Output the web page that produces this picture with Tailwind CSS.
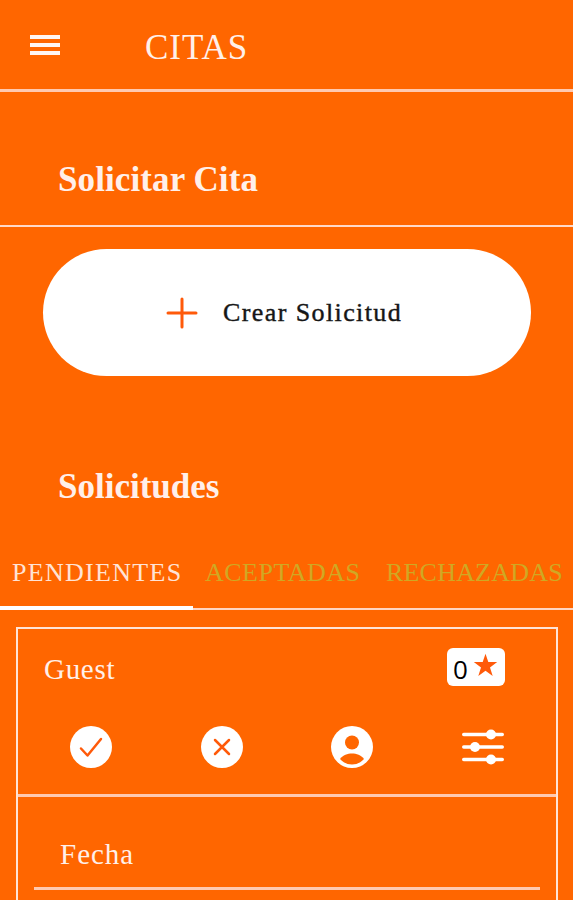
<!doctype html>
<html lang="es">
  <head>
    <meta charset="UTF-8">
    <meta name="viewport" content="width=device-width, initial-scale=1.0">
    <title>Citas</title>
    <script src="https://cdn.jsdelivr.net/npm/@tailwindcss/browser@4"></script>
  </head>
  <body class="h-screen overflow-hidden bg-[#ff6600] text-[#fff0ea] font-['Liberation_Serif',serif]">
    <header class="flex items-center h-[92px] border-b-3 border-[#ffc9b0] pl-[30px]">
      <button class="flex flex-col gap-1 w-[30px] mr-[85px]" aria-label="Menú">
        <span class="h-[4px] bg-[#fff6f2]"></span>
        <span class="h-[4px] bg-[#fff6f2]"></span>
        <span class="h-[4px] bg-[#fff6f2]"></span>
      </button>
      <h1 class="text-[35px] leading-none tracking-[1px] pt-[5px]">CITAS</h1>
    </header>

    <main>
      <div class="h-[135px] border-b-2 border-[#ffd9c8] pl-[58px] pt-[70px]">
        <h2 class="text-[35px] leading-none font-bold tracking-[0.1px]">Solicitar Cita</h2>
      </div>

      <div class="pt-[22px] pl-[43px]">
        <button class="flex items-center w-[488px] h-[127px] rounded-full bg-white pl-[123px] text-[#161616]">
          <svg class="w-8 h-8 mr-[25px]" viewBox="0 0 32 32" fill="none" stroke="#ff5a0a" stroke-width="3" stroke-linecap="round">
            <path d="M16 2v28M2 16h28" />
          </svg>
          <span class="text-[26px] leading-none tracking-[1.4px] [-webkit-text-stroke:0.4px_#161616]">Crear Solicitud</span>
        </button>
      </div>

      <h2 class="h-[170px] pl-[58px] pt-[93px] text-[35px] leading-none font-bold">Solicitudes</h2>

      <!-- tabs -->
      <nav class="flex h-[64px] text-[26px] leading-none text-[#d0a823]">
        <a class="w-[193px] border-b-4 border-white pl-[12px] pt-[14px] tracking-[1.3px] text-[#ffe3d6]">PENDIENTES</a>
        <a class="w-[181px] border-b-2 border-[#ffd5c1] pl-[12px] pt-[14px] tracking-[0.5px]">ACEPTADAS</a>
        <a class="w-[199px] border-b-2 border-[#ffd5c1] pl-[12px] pt-[14px] tracking-[0.2px]">RECHAZADAS</a>
      </nav>

      <section class="mt-[17px] ml-[16px] w-[542px] h-[300px] border-2 border-[#ffe3d6]">
        <div class="h-[168px] border-b-3 border-[#ffc9b0]">
          <div class="flex justify-between items-start pl-[26px] pr-[51px] pt-[19px]">
            <span class="text-[29px] leading-none tracking-[0.7px] pt-[7px]">Guest</span>
            <span class="flex items-center w-[58px] h-[38px] rounded-md bg-white pl-[6px] text-black">
              <span class="text-[26px] leading-none font-['Open_Sans',sans-serif] pt-[3px]">0</span>
              <svg class="w-[25px] h-[24px] ml-[5px] -mt-1" viewBox="0 0 24 24" fill="#ff5a0a">
                <path d="M12 .8l2.8 8.3h8.9l-7.2 5.3 2.7 8.5L12 17.7l-7.2 5.2 2.7-8.5L.3 9.100h8.900z" />
              </svg>
            </span>
          </div>
          <div class="flex justify-between pl-[52px] pr-[52px] pt-[40px]">
            <svg class="w-[42px] h-[42px]" viewBox="0 0 42 42" fill="none" stroke="#ff5a0a" stroke-width="2.500" stroke-linecap="round" stroke-linejoin="round">
              <circle cx="21" cy="21" r="21" fill="#fff" stroke="none" />
              <path d="M11 22.500l6.500 7L31 13" />
            </svg>
            <svg class="w-[42px] h-[42px]" viewBox="0 0 42 42" fill="none" stroke="#ff5a0a" stroke-width="2.500" stroke-linecap="round">
              <circle cx="21" cy="21" r="21" fill="#fff" stroke="none" />
              <path d="M14 14l14 14M28 14L14 28" />
            </svg>
            <svg class="w-[42px] h-[42px]" viewBox="0 0 42 42" fill="#ff6600">
              <circle cx="21" cy="21" r="21" fill="#fff" />
              <circle cx="21" cy="16.500" r="7" />
              <path d="M9 33C12 29 16.500 27.500 21 27.500S30 29 33 33C29.500 36.800 25.500 38.500 21 38.500S12.500 36.800 9 33z" />
            </svg>
            <svg class="w-[42px] h-[42px]" viewBox="0 0 42 42" fill="#fff" stroke="#fff" stroke-width="3.500" stroke-linecap="round">
              <path d="M1.750 8.500h38.500M1.750 21h38.500M1.750 33.500h38.500" />
              <g stroke="none">
                <circle cx="29" cy="8.500" r="5" />
                <circle cx="13" cy="21" r="5" />
                <circle cx="29" cy="33.500" r="5" />
              </g>
            </svg>
          </div>
        </div>
        <div class="ml-[16px] w-[506px] h-[93px] border-b-3 border-[#ffc9b0] pl-[26px] pt-[43px]">
          <span class="block text-[29px] leading-none tracking-[1px]">Fecha</span>
        </div>
      </section>
    </main>
  </body>
</html>
